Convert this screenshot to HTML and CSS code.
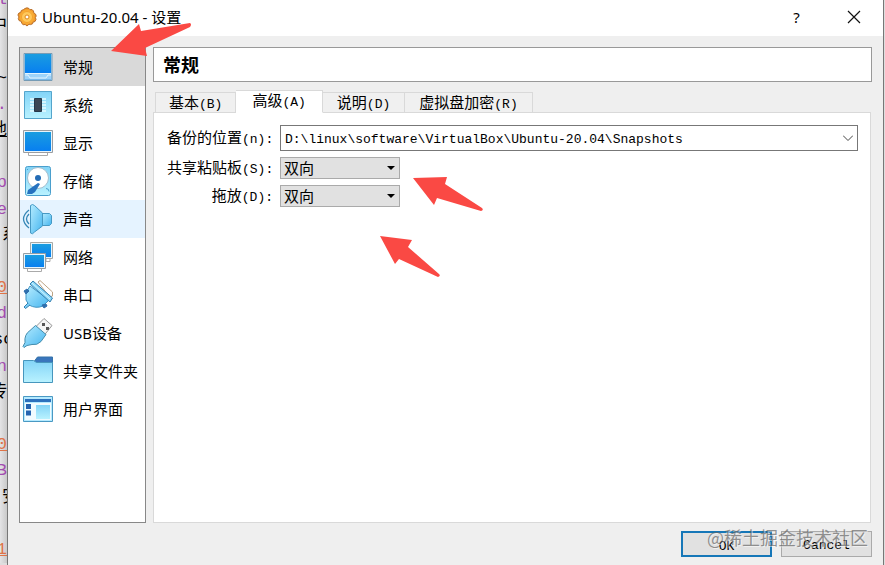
FILE: index.html
```html
<!DOCTYPE html>
<html lang="zh-CN">
<head>
<meta charset="utf-8">
<title>Ubuntu-20.04 - 设置</title>
<link rel="stylesheet" href="styles.css">
</head>
<body>
<div class="screen">
  <div class="editor" aria-hidden="true">
    <span class="purple">l</span><span>中</span><span></span><span>~</span><span class="purple">.</span><span class="link">地</span><span></span>
    <span class="purple">p</span><span class="purple">e</span><span class="lead">系</span><span></span><span class="orange">0</span><span class="purple">d</span><span class="start">sc</span>
    <span class="purple">n</span><span>传</span><span></span><span class="orange">0</span><span class="purple">B</span><span class="lead">安</span><span></span><span class="orange">1</span>
  </div>
  <main class="dialog">
    <header class="titlebar">
      <svg class="gear" viewBox="0 0 20 20">
        <defs><radialGradient id="gold"><stop offset="0" stop-color="#fff0a0"/><stop offset=".6" stop-color="#fcb73d"/><stop offset="1" stop-color="#ef8d20"/></radialGradient></defs>
        <path d="M8 1.5 10 .8l2 .7 1 1.2 2-.2 1.5 1.5.2 1.8L18.500 7l.7 2-.8 1.500.6 2-1 2-1.800.5-.7 1.800-2 .8-1.500-.4L10 19l-1.800-1.500-2 .2-1.600-1.500-.2-1.700L2 13.500l-.7-2L2 10 .9 8l1-2 1.800-.5.6-2 2-.8z" fill="url(#gold)" stroke="#b9702c"/>
        <circle cx="10" cy="10" r="5.500" fill="#ffc95c" stroke="#f5a12c"/><circle cx="10" cy="10" r="2" fill="#fff" stroke="#dc841d"/>
      </svg>
      <h1>Ubuntu-20.04 - 设置</h1>
      <button class="caption" aria-label="帮助">?</button>
      <button class="caption" aria-label="关闭"><svg class="cross" viewBox="0 0 14 14"><path d="m1 1 12 12M13 1 1 13" fill="none" stroke="#111" stroke-width="1.2"/></svg></button>
    </header>
    <div class="body">
      <nav class="sidebar">
        <svg class="defs"><defs>
          <linearGradient id="blue" x2="0" y2="1"><stop offset="0" stop-color="#1a9de0"/><stop offset="1" stop-color="#087ff0"/></linearGradient>
          <linearGradient id="sky" x2="0" y2="1"><stop offset="0" stop-color="#83d4f7"/><stop offset="1" stop-color="#b9f2ff"/></linearGradient>
          <linearGradient id="aqua" x2="1" y2="1"><stop offset="0" stop-color="#b6ecff"/><stop offset="1" stop-color="#45b5ef"/></linearGradient>
        </defs></svg>
        <a class="item selected" href="#general"><svg viewBox="0 0 32 32"><path d="M2 2.500h28v27H2z" fill="#9ed3fa" stroke="#769bb5"/><path d="M3 3h26v19H3z" fill="url(#blue)"/><path d="M3 22.500h26M3 24h3l2 3h16l2-3h3" fill="none" stroke="#e2f4ff"/><path d="M3 28.500h26" stroke="#78b8e9"/></svg><span>常规</span></a>
        <a class="item" href="#system"><svg viewBox="0 0 32 32"><path d="M2.500 2.500h27v27h-27z" fill="url(#sky)" stroke="#55a5cc"/><path d="M8 10h16M8 13h16M8 16h16M8 19h16M8 22h16" stroke="#e8fbff" stroke-width="1.500"/><path d="M12.500 9.500h7v13h-7z" fill="#3b4654" stroke="#26384a"/></svg><span>系统</span></a>
        <a class="item" href="#display"><svg viewBox="0 0 32 32"><path d="M1.500 3.500h29v22h-29z" fill="#e8f4fa" stroke="#9b9da0"/><path d="M3 5h26v19H3z" fill="url(#blue)"/><path d="M6.500 26v2.500h19V26" fill="#fff" stroke="#aaa"/></svg><span>显示</span></a>
        <a class="item" href="#storage"><svg viewBox="0 0 32 32"><rect x="3.500" y="1.500" width="25" height="29" rx="2" fill="url(#sky)" stroke="#4a9fcd"/><circle cx="16" cy="13" r="10.500" fill="#fff" stroke="#a2bdce"/><circle cx="16" cy="13" r="3" fill="#246cb5"/><path d="m6 25 10-7 2 1-5 8-3 2H5z" fill="#2672bf"/><path d="M24 23.500a3 3 0 0 1 3 3M5 5l1-1" fill="none" stroke="#4a9fcd"/></svg><span>存储</span></a>
        <a class="item hover" href="#sound"><svg viewBox="0 0 32 32"><path d="M19.500 10.500h8l2 2v8l-2 2h-8z" fill="url(#aqua)" stroke="#4699c4"/><path d="M8.500 2.500q2-2 4 0L20.500 10v13l-8 6q-2 3-4 1z" fill="url(#aqua)" stroke="#4699c4"/><path d="M7 7Q-4 16 7 25M7 11q-5 5 0 10" fill="none" stroke="#3687b6" stroke-width="1.300"/></svg><span>声音</span></a>
        <a class="item" href="#network"><svg viewBox="0 0 32 32"><path d="M8.500 1.500h22v16h-22z" fill="#e5f4fd" stroke="#a9a9a5"/><path d="M10 3h19v13H10z" fill="url(#blue)"/><path d="M24 18v2.500h4V18" fill="#fff" stroke="#aaa"/><path d="M1.500 12.500h22v15h-22z" fill="#e5f4fd" stroke="#969ea3"/><path d="M3 14h19v12H3z" fill="url(#blue)"/><path d="M5.500 28v2.500h14V28" fill="#fff" stroke="#aaa"/></svg><span>网络</span></a>
        <a class="item" href="#serial"><svg viewBox="0 0 32 32"><path d="m16 3 2-1.500L30.500 13v4l-3 1z" fill="#fff" stroke="#bda485"/><path d="M8 7 4 14v7l3 5q7 4 14 1l6-6z" fill="url(#aqua)" stroke="#4294c2"/><path d="m6 24-4 4 1.500 1.500L8 26" fill="#78cdf5" stroke="#367faf"/><path d="m8 5 3-3 19.500 17-2.500 4z" fill="#8ad6f7" stroke="#367faf" stroke-linejoin="round"/><path d="m10 4 18 16" stroke="#d4f5ff"/><path d="m2 12 3-2 2 2-3 3zM20 26l4-1 1 2-3 2z" fill="#2f6eac" stroke="#2f6eac"/></svg><span>串口</span></a>
        <a class="item" href="#usb"><svg viewBox="0 0 32 32"><path d="m22 1.500 8 7-8 10-9-8z" fill="#f5f5f5" stroke="#999"/><path d="M20 6h3v3h-3zM24 10h3v3h-3z" fill="#555"/><path d="M13.500 8.500 24 17.500l-5 7q-4 4-9 3l-5 1-3 2-1-1 2-4q-1-8 5-12z" fill="url(#aqua)" stroke="#458dad"/></svg><span>USB设备</span></a>
        <a class="item" href="#folders"><svg viewBox="0 0 32 32"><path d="m12.500 6 3-4h15v8h-18z" fill="#3975bc" stroke="#3473a9"/><path d="M1.500 5.500h10l3 2h16v20h-29z" fill="url(#sky)" stroke="#4796bd"/></svg><span>共享文件夹</span></a>
        <a class="item" href="#interface"><svg viewBox="0 0 32 32"><path d="M1.500 3.500h29v25h-29z" fill="#b5eaff" stroke="#4a99c3"/><path d="M3 6h26v3H3z" fill="#2c71bd"/><path d="M3 10h26v17H3z" fill="#f1fbff"/><path d="M14 12h14v14H14z" fill="url(#sky)"/><path d="M4 11h5v5H4zM4 17.500h5v5H4z" fill="#2464b0"/></svg><span>用户界面</span></a>
      </nav>
      <section class="content">
        <h2>常规</h2>
        <div class="tabs" role="tablist">
          <button class="tab" role="tab">基本<span class="mono">(B)</span></button>
          <button class="tab active" role="tab" aria-selected="true">高级<span class="mono">(A)</span></button>
          <button class="tab" role="tab">说明<span class="mono">(D)</span></button>
          <button class="tab wide" role="tab">虚拟盘加密<span class="mono">(R)</span></button>
        </div>
        <form class="panel" id="settings">
          <label for="folder">备份的位置<span class="mono">(n):</span></label>
          <div class="combo"><input id="folder" class="mono" value="D:\linux\software\VirtualBox\Ubuntu-20.04\Snapshots"><button type="button" class="drop" aria-label="选择位置"><svg viewBox="0 0 10 6"><path d="m0 .5 5 5 5-5" fill="none" stroke="#444"/></svg></button></div>
          <label for="clip">共享粘贴板<span class="mono">(S):</span></label>
          <div class="pick"><select id="clip"><option>双向</option></select></div>
          <label for="drag">拖放<span class="mono">(D):</span></label>
          <div class="pick"><select id="drag"><option>双向</option></select></div>
        </form>
      </section>
    </div>
    <footer>
      <button class="action mono primary">OK</button>
      <button class="action mono">Cancel</button>
      <span class="watermark">@稀土掘金技术社区</span>
    </footer>
  </main>
  <svg class="arrow arrow-title" viewBox="0 0 80 34"><path d="m0 28 28-27 2 7 49-8q2 1 0 4L34 25l2 8z"/></svg>
  <svg class="arrow arrow-clip" viewBox="0 0 72 36"><path d="m0 1 34-1-2 7 37 24q2 2-1 3L24 21l-3 7z"/></svg>
  <svg class="arrow arrow-drag" viewBox="0 0 62 42"><path d="m0 0 32 4-4 7 31 27q2 2-1 3L19 23l-4 5z"/></svg>
</div>
</body>
</html>
```
FILE: styles.css
```css
* { box-sizing: border-box; }
body { margin: 0; font: 15px/20px "Noto Sans", "Noto Sans CJK SC", sans-serif; color: #000; }
button, input, select { font: inherit; color: inherit; margin: 0; padding: 0; border: 0; border-radius: 0; }
svg { display: block; flex: none; }
.screen { position: relative; display: flex; height: 100vh; min-height: 480px; overflow: hidden; background: #dedede; padding-right: 1px; }
.mono { font-family: "Liberation Mono", monospace; font-size: 13px; }

.editor { width: 7px; height: 576px; flex: none; margin-top: -13px; display: flex; flex-direction: column; justify-content: space-between; background: linear-gradient(90deg, #e4e4e6, #c9c9c9); overflow: hidden; }
.editor span { height: 26px; display: flex; justify-content: flex-end; font: 17px/26px "Liberation Mono", "Noto Sans CJK SC", monospace; }
.editor .start { justify-content: flex-start; margin-left: -7px; }
.editor .lead { justify-content: flex-start; padding-left: 2px; }
.editor .purple { color: #a24cb0; }
.editor .orange { color: #de7448; text-decoration: underline; }
.editor .link { text-decoration: underline; }

.dialog { flex: 1; min-width: 0; display: flex; flex-direction: column; background: #efefef; border: solid #777; border-width: 0 1px; }
.titlebar { height: 36px; flex: none; display: flex; align-items: center; background: #fff; padding: 0 1px 2px 9px; }
.gear { width: 20px; height: 20px; }
h1 { font: 15px/20px "Noto Sans", "Noto Sans CJK SC", sans-serif; margin: 0 auto 0 5px; }
.caption { width: 57px; height: 34px; background: none; display: grid; place-items: center; }
.cross { width: 14px; height: 14px; }

.body { flex: 1; min-height: 0; display: flex; gap: 7px; padding: 11px 11px 0; }
.sidebar { width: 127px; flex: none; background: #fff; border: 1px solid #888; }
.defs { position: absolute; width: 0; height: 0; }
.item { height: 38px; display: flex; align-items: center; gap: 9px; padding-left: 2px; color: #000; text-decoration: none; white-space: nowrap; }
.item svg { width: 32px; height: 32px; }
.selected { background: #d9d9d9; }
.hover { background: #e5f3ff; }

.content { flex: 1; min-width: 0; display: flex; flex-direction: column; }
h2 { height: 35px; flex: none; margin: 0 0 8px; padding-left: 9px; font: bold 18px/33px "Noto Sans CJK SC", sans-serif; background: #fff; border: 1px solid #999; }
.tabs { display: flex; align-items: flex-end; height: 23px; padding-left: 2px; position: relative; z-index: 1; margin-bottom: -1px; }
.tab { height: 21px; padding: 0 14px; white-space: nowrap; line-height: 19px; border: 1px solid #d9d9d9; border-left-width: 0; background: #f0f0f0; }
.tab:first-child { border-left-width: 1px; padding: 0 13px; }
.tab.active { height: 23px; padding: 0 16px; background: #fff; border-bottom-color: #fff; }
.tab.wide { padding: 0 14px; }
.panel { flex: 1; display: grid; grid-template-columns: 106px 1fr; grid-template-rows: 26px 22px 22px; align-content: start; column-gap: 7px; row-gap: 6px; padding: 12px 12px 12px 13px; background: #fff; border: 1px solid #d9d9d9; margin-right: 1px; }
.panel label { text-align: right; align-self: center; white-space: nowrap; }
.combo { display: flex; border: 1px solid #777; background: #fff; }
.combo input { flex: 1; min-width: 0; padding: 3px 0 0 4px; background: none; }
.drop { width: 18px; background: none; display: grid; place-items: center; }
.drop svg { width: 10px; height: 6px; }
.pick { position: relative; width: 120px; display: flex; }
.pick select { appearance: none; width: 100%; height: 22px; padding-left: 3px; border: 1px solid #aaa; background: #e1e1e1; }
.pick::after { content: ""; position: absolute; right: 5px; top: 9px; border: 4px solid transparent; border-top-color: #000; border-bottom: 0; pointer-events: none; }

footer { position: relative; flex: none; display: flex; justify-content: flex-end; gap: 9px; padding: 8px 11px; }
.action { width: 91px; height: 26px; background: #e1e1e1; border: 1px solid #aaa; padding-top: 4px; }
.action.primary { border: 2px solid #1677b8; }
.watermark { position: absolute; right: 15px; top: 3px; font: 18px/22px "Noto Sans CJK SC", sans-serif; color: #666666b0; text-shadow: 1px 1px #ffffff80; white-space: nowrap; pointer-events: none; }

.arrow { position: absolute; fill: #fa4944; pointer-events: none; }
.arrow-title { left: 111px; top: 23px; width: 80px; height: 34px; }
.arrow-clip { left: 413px; top: 177px; width: 72px; height: 36px; }
.arrow-drag { left: 380px; top: 236px; width: 62px; height: 42px; }
```
